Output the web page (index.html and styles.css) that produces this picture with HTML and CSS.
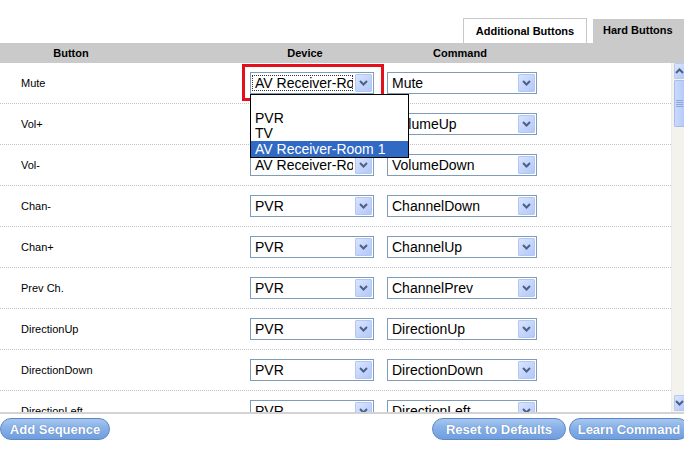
FILE: index.html
```html
<!DOCTYPE html>
<html>
<head>
<meta charset="utf-8">
<link rel="stylesheet" href="styles.css">
</head>
<body>
<div class="app">
  <div class="tabs">
    <div class="tab tab-inactive">Additional Buttons</div>
    <div class="tab tab-active">Hard Buttons</div>
  </div>
  <div class="thead">
    <div class="th th-button">Button</div>
    <div class="th th-device">Device</div>
    <div class="th th-command">Command</div>
  </div>
  <div class="body">
    <div class="rows">
      <div class="row">
        <div class="label">Mute</div>
        <div class="cell cell-open">
          <div class="select device"><span class="val focus">AV Receiver-Room 1</span><span class="arrow"><svg width="9" height="6" viewBox="0 0 9 6"><polyline points="1,1 4.5,4.5 8,1" fill="none" stroke="#4d6185" stroke-width="2"/></svg></span></div>
          <div class="highlight"></div>
          <div class="listbox">
            <div class="opt opt-blank"></div>
            <div class="opt">PVR</div>
            <div class="opt">TV</div>
            <div class="opt opt-sel">AV Receiver-Room 1</div>
          </div>
        </div>
        <div class="cell"><div class="select command"><span class="val">Mute</span><span class="arrow"><svg width="9" height="6" viewBox="0 0 9 6"><polyline points="1,1 4.5,4.5 8,1" fill="none" stroke="#4d6185" stroke-width="2"/></svg></span></div></div>
      </div>
      <div class="row">
        <div class="label">Vol+</div>
        <div class="cell"><div class="select device"><span class="val">AV Receiver-Room 1</span><span class="arrow"><svg width="9" height="6" viewBox="0 0 9 6"><polyline points="1,1 4.5,4.5 8,1" fill="none" stroke="#4d6185" stroke-width="2"/></svg></span></div></div>
        <div class="cell"><div class="select command"><span class="val">VolumeUp</span><span class="arrow"><svg width="9" height="6" viewBox="0 0 9 6"><polyline points="1,1 4.5,4.5 8,1" fill="none" stroke="#4d6185" stroke-width="2"/></svg></span></div></div>
      </div>
      <div class="row">
        <div class="label">Vol-</div>
        <div class="cell"><div class="select device"><span class="val">AV Receiver-Room 1</span><span class="arrow"><svg width="9" height="6" viewBox="0 0 9 6"><polyline points="1,1 4.5,4.5 8,1" fill="none" stroke="#4d6185" stroke-width="2"/></svg></span></div></div>
        <div class="cell"><div class="select command"><span class="val">VolumeDown</span><span class="arrow"><svg width="9" height="6" viewBox="0 0 9 6"><polyline points="1,1 4.5,4.5 8,1" fill="none" stroke="#4d6185" stroke-width="2"/></svg></span></div></div>
      </div>
      <div class="row">
        <div class="label">Chan-</div>
        <div class="cell"><div class="select device"><span class="val">PVR</span><span class="arrow"><svg width="9" height="6" viewBox="0 0 9 6"><polyline points="1,1 4.5,4.5 8,1" fill="none" stroke="#4d6185" stroke-width="2"/></svg></span></div></div>
        <div class="cell"><div class="select command"><span class="val">ChannelDown</span><span class="arrow"><svg width="9" height="6" viewBox="0 0 9 6"><polyline points="1,1 4.5,4.5 8,1" fill="none" stroke="#4d6185" stroke-width="2"/></svg></span></div></div>
      </div>
      <div class="row">
        <div class="label">Chan+</div>
        <div class="cell"><div class="select device"><span class="val">PVR</span><span class="arrow"><svg width="9" height="6" viewBox="0 0 9 6"><polyline points="1,1 4.5,4.5 8,1" fill="none" stroke="#4d6185" stroke-width="2"/></svg></span></div></div>
        <div class="cell"><div class="select command"><span class="val">ChannelUp</span><span class="arrow"><svg width="9" height="6" viewBox="0 0 9 6"><polyline points="1,1 4.5,4.5 8,1" fill="none" stroke="#4d6185" stroke-width="2"/></svg></span></div></div>
      </div>
      <div class="row">
        <div class="label">Prev Ch.</div>
        <div class="cell"><div class="select device"><span class="val">PVR</span><span class="arrow"><svg width="9" height="6" viewBox="0 0 9 6"><polyline points="1,1 4.5,4.5 8,1" fill="none" stroke="#4d6185" stroke-width="2"/></svg></span></div></div>
        <div class="cell"><div class="select command"><span class="val">ChannelPrev</span><span class="arrow"><svg width="9" height="6" viewBox="0 0 9 6"><polyline points="1,1 4.5,4.5 8,1" fill="none" stroke="#4d6185" stroke-width="2"/></svg></span></div></div>
      </div>
      <div class="row">
        <div class="label">DirectionUp</div>
        <div class="cell"><div class="select device"><span class="val">PVR</span><span class="arrow"><svg width="9" height="6" viewBox="0 0 9 6"><polyline points="1,1 4.5,4.5 8,1" fill="none" stroke="#4d6185" stroke-width="2"/></svg></span></div></div>
        <div class="cell"><div class="select command"><span class="val">DirectionUp</span><span class="arrow"><svg width="9" height="6" viewBox="0 0 9 6"><polyline points="1,1 4.5,4.5 8,1" fill="none" stroke="#4d6185" stroke-width="2"/></svg></span></div></div>
      </div>
      <div class="row">
        <div class="label">DirectionDown</div>
        <div class="cell"><div class="select device"><span class="val">PVR</span><span class="arrow"><svg width="9" height="6" viewBox="0 0 9 6"><polyline points="1,1 4.5,4.5 8,1" fill="none" stroke="#4d6185" stroke-width="2"/></svg></span></div></div>
        <div class="cell"><div class="select command"><span class="val">DirectionDown</span><span class="arrow"><svg width="9" height="6" viewBox="0 0 9 6"><polyline points="1,1 4.5,4.5 8,1" fill="none" stroke="#4d6185" stroke-width="2"/></svg></span></div></div>
      </div>
      <div class="row">
        <div class="label">DirectionLeft</div>
        <div class="cell"><div class="select device"><span class="val">PVR</span><span class="arrow"><svg width="9" height="6" viewBox="0 0 9 6"><polyline points="1,1 4.5,4.5 8,1" fill="none" stroke="#4d6185" stroke-width="2"/></svg></span></div></div>
        <div class="cell"><div class="select command"><span class="val">DirectionLeft</span><span class="arrow"><svg width="9" height="6" viewBox="0 0 9 6"><polyline points="1,1 4.5,4.5 8,1" fill="none" stroke="#4d6185" stroke-width="2"/></svg></span></div></div>
      </div>
    </div>
    <div class="scrollbar">
      <div class="sb-btn"><svg width="9" height="6" viewBox="0 0 9 6"><polyline points="1,5 4.5,1.5 8,5" fill="none" stroke="#4d6185" stroke-width="2"/></svg></div>
      <div class="sb-thumb"><div class="grip"></div><div class="grip"></div><div class="grip"></div><div class="grip"></div></div>
      <div class="sb-track"></div>
      <div class="sb-btn"><svg width="9" height="6" viewBox="0 0 9 6"><polyline points="1,1 4.5,4.5 8,1" fill="none" stroke="#4d6185" stroke-width="2"/></svg></div>
    </div>
  </div>
  <div class="footer">
    <button class="pill pill-add">Add Sequence</button>
    <div class="spacer"></div>
    <button class="pill pill-reset">Reset to Defaults</button>
    <button class="pill pill-learn">Learn Command</button>
  </div>
</div>
</body>
</html>
```

FILE: styles.css
```css
html, body {
  margin: 0;
  padding: 0;
  background: #ffffff;
}
body {
  width: 684px;
  height: 459px;
  overflow: hidden;
  font-family: "Liberation Sans", Arial, sans-serif;
  color: #000;
}
.app {
  width: 684px;
}
.tabs {
  height: 43px;
  display: flex;
  justify-content: flex-end;
  align-items: flex-end;
  gap: 6px;
}
.tab {
  box-sizing: border-box;
  font-size: 11px;
  font-weight: bold;
}
.tab-inactive {
  width: 124px;
  height: 25px;
  border: 1px solid #c8c8c8;
  border-bottom: none;
  background: #fff;
  text-align: center;
  line-height: 25px;
}
.tab-active {
  width: 91px;
  height: 24px;
  background: #cacaca;
  padding-left: 10px;
  line-height: 22px;
}
.thead {
  height: 20px;
  background: #cacaca;
  display: flex;
  align-items: center;
  font-size: 11px;
  font-weight: bold;
}
.th {
  text-align: center;
}
.th-button {
  width: 142px;
}
.th-device {
  width: 110px;
  margin-left: 108px;
}
.th-command {
  width: 150px;
  margin-left: 25px;
}
.body {
  display: flex;
  height: 349px;
}
.rows {
  width: 671px;
  height: 349px;
  overflow: hidden;
}
.row {
  box-sizing: border-box;
  height: 41px;
  border-bottom: 1px dotted #c4c4c4;
  display: grid;
  grid-template-columns: 250px 137px 150px;
  align-items: center;
}
.label {
  padding-left: 21px;
  font-size: 11px;
}
.cell {
  position: relative;
}
.cell-open {
  z-index: 5;
}
.select {
  box-sizing: border-box;
  height: 22px;
  border: 1px solid #7f9db9;
  background: #fff;
  display: flex;
  align-items: center;
  font-size: 14px;
}
.select.device {
  width: 124px;
}
.select.command {
  width: 150px;
}
.val {
  flex: 1;
  min-width: 0;
  overflow: hidden;
  white-space: nowrap;
  padding-left: 4px;
  line-height: 16px;
}
.val.focus {
  margin-left: 1px;
  padding-left: 3px;
  outline: 1px dotted #333;
  outline-offset: -1px;
}
.arrow {
  box-sizing: border-box;
  width: 17px;
  height: 18px;
  margin: 0 1px 0 2px;
  border: 1px solid #b4c7f3;
  border-radius: 1px;
  background: linear-gradient(135deg, #d9e4fe 0%, #c3d4fc 55%, #b4c8f7 100%);
  display: flex;
  align-items: center;
  justify-content: center;
}
.highlight {
  position: absolute;
  left: -8px;
  top: -8px;
  width: 142px;
  height: 37px;
  box-sizing: border-box;
  border: 3px solid #e3101c;
}
.listbox {
  position: absolute;
  left: 0;
  top: 22px;
  width: 159px;
  box-sizing: border-box;
  border: 1px solid #000;
  background: #fff;
  font-size: 14px;
}
.opt {
  height: 15px;
  line-height: 15px;
  padding-left: 4px;
  white-space: nowrap;
}
.opt-blank {
  height: 16px;
}
.opt-sel {
  height: 16px;
  line-height: 16px;
  background: #316ac5;
  color: #fff;
}
.scrollbar {
  width: 13px;
  height: 349px;
  background: #f3f2ec;
  border-left: 1px solid #ecebe4;
  box-sizing: border-box;
  display: flex;
  flex-direction: column;
  padding: 0 0 1px 2px;
}
.sb-btn {
  height: 16px;
  box-sizing: border-box;
  border: 1px solid #b6c8f1;
  border-right: none;
  border-radius: 2px 0 0 2px;
  background: linear-gradient(135deg, #dbe6fe 0%, #c3d4fc 60%, #b3c6f5 100%);
  display: flex;
  align-items: center;
  justify-content: center;
}
.sb-thumb {
  margin-top: 1px;
  height: 47px;
  box-sizing: border-box;
  border: 1px solid #a9bdec;
  border-right: none;
  border-radius: 2px 0 0 2px;
  background: linear-gradient(90deg, #cad9fd 0%, #bfd1fb 60%, #b5c8f7 100%);
  display: flex;
  flex-direction: column;
  justify-content: center;
  align-items: center;
  gap: 1px;
}
.grip {
  width: 7px;
  height: 1px;
  background: #8ea5da;
}
.sb-track {
  flex: 1;
}
.footer {
  box-sizing: border-box;
  width: 689px;
  border-top: 2px solid #d3d3d3;
  padding-top: 4px;
  display: flex;
  gap: 3px;
}
.spacer {
  flex: 1;
}
.pill {
  flex-shrink: 0;
  height: 22px;
  box-sizing: border-box;
  border: 1px solid #5f87c0;
  border-radius: 11px;
  background: linear-gradient(#a6c6ef 0%, #86b0e8 45%, #6f9ee0 100%);
  color: #fff;
  font-family: "Liberation Sans", Arial, sans-serif;
  font-size: 13px;
  font-weight: bold;
  padding: 0;
  text-shadow: 0 0 1px #4a6fa8;
}
.pill-add {
  width: 110px;
}
.pill-reset {
  width: 134px;
}
.pill-learn {
  width: 120px;
}
```
